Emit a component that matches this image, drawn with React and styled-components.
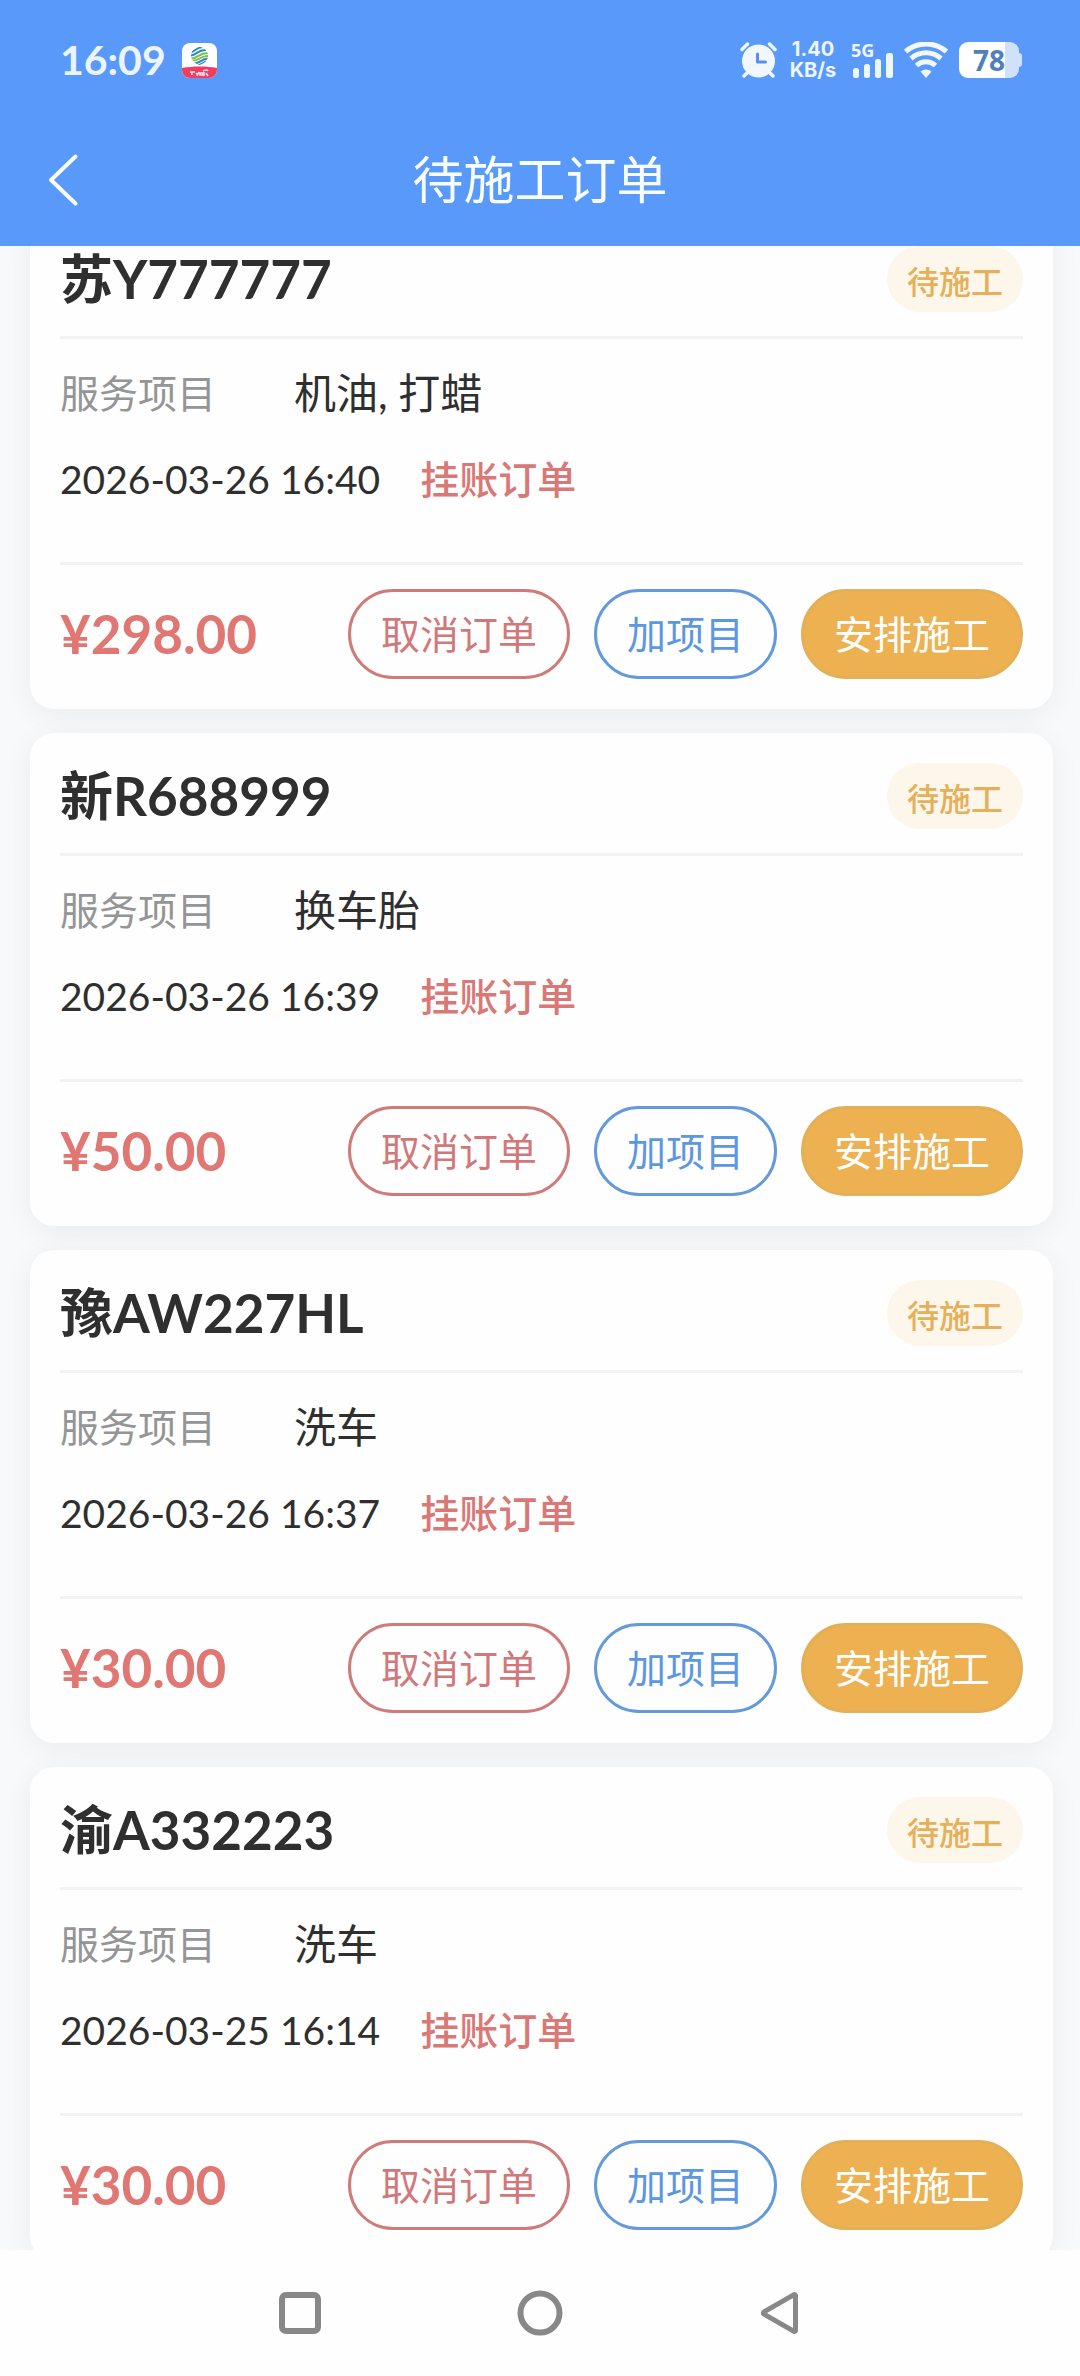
import React, { useLayoutEffect, useRef } from "react";
import styled, { createGlobalStyle, css } from "styled-components";

const GlobalStyle = createGlobalStyle`
  *, *::before, *::after { box-sizing: border-box; }
  body {
    margin: 0;
    background: #ffffff;
    color: #2f2f2f;
    font-family: Lato, "Noto Sans CJK SC", sans-serif;
  }
  h1, h2, p, dl, dt, dd, ul { margin: 0; padding: 0; }
  button { font-family: inherit; cursor: pointer; }
  svg { display: block; }
`;

const Screen = styled.div`
  display: flex;
  flex-direction: column;
  height: 100vh;
`;

const Header = styled.header`
  flex: none;
  background: #5999fa;
  color: #f8fdff;
`;

const StatusBar = styled.div`
  display: flex;
  align-items: center;
  justify-content: space-between;
  height: 114px;
  padding: 6px 58px 0 60px;
`;

const StatusGroup = styled.div`
  display: flex;
  align-items: center;
  gap: ${(p) => p.$gap}px;
`;

const Clock = styled.time`
  font-size: 41px;
  line-height: 48px;
  font-weight: 700;
  color: #ecf5ff;
`;

const NetSpeed = styled.div`
  display: flex;
  flex-direction: column;
  align-items: center;
  width: 46px;
  margin: 0 4px 0 2px;
  font-family: Inter, sans-serif;
  font-weight: 700;
  font-size: 20px;
  line-height: 21px;
  color: #eef6ff;
`;

const Signal = styled.div`
  display: grid;
  width: 42px;
  height: 36px;
  color: #eef6ff;

  > * { grid-area: 1 / 1; }
`;

const SignalLabel = styled.span`
  font-family: "Noto Sans", sans-serif;
  font-weight: 700;
  font-size: 18px;
  line-height: 16px;
`;

const Battery = styled.div`
  display: flex;
  align-items: center;
`;

const BatteryBody = styled.span`
  display: flex;
  align-items: center;
  justify-content: center;
  width: 60px;
  height: 36px;
  border-radius: 9px;
  background: linear-gradient(to right, #ffffff 46px, #cfe1fc 46px);
  color: #4f7fbf;
  font-family: "Noto Sans", sans-serif;
  font-weight: 700;
  font-size: 28px;
  line-height: 36px;
`;

const BatteryTip = styled.span`
  width: 3px;
  height: 14px;
  border-radius: 0 3px 3px 0;
  background: #cfe1fc;
`;

const TitleBar = styled.div`
  display: grid;
  grid-template-columns: 84px 1fr 84px;
  align-items: center;
  height: 132px;
`;

const BackButton = styled.button`
  display: flex;
  align-items: center;
  justify-content: flex-end;
  height: 84px;
  padding: 0 4px;
  border: 0;
  background: none;
  color: inherit;
`;

const PageTitle = styled.h1`
  font-size: 51px;
  line-height: 60px;
  font-weight: 400;
  text-align: center;
`;

const Orders = styled.main`
  flex: 1;
  min-height: 0;
  overflow-y: auto;
  scrollbar-width: none;
  background: #f8f9fb;
`;

const OrderList = styled.ul`
  display: flex;
  flex-direction: column;
  gap: 24px;
  padding: 24px 27px 24px 30px;
  list-style: none;
`;

const Card = styled.li`
  padding: 30px;
  border-radius: 24px;
  background: #fefefe;
  box-shadow: 0 6px 30px rgba(0, 0, 0, 0.06);
`;

const CardHeader = styled.div`
  display: flex;
  align-items: center;
  justify-content: space-between;
  padding-bottom: 24px;
  border-bottom: 3px solid #f2f3f5;
`;

const Plate = styled.h2`
  font-size: 53px;
  line-height: 66px;
  font-weight: 700;
`;

const Badge = styled.span`
  padding: 6px 20px 0;
  border-radius: 33px;
  background: #fdf6ea;
  color: #e5b059;
  font-size: 32px;
  line-height: 60px;
  font-weight: 500;
`;

const CardBody = styled.div`
  display: flex;
  flex-direction: column;
  gap: 26px;
  padding: 24px 0 53px;
`;

const Row = styled.div`
  display: flex;
  align-items: center;
  height: 60px;
  font-size: 39px;
  line-height: 60px;
`;

const Services = styled(Row).attrs({ as: "dl" })``;

const Label = styled.dt`
  width: 234px;
  color: #949596;
`;

const Value = styled.dd`
  font-size: 42px;
`;

const OrderTime = styled.time`
  font-size: 39px;
`;

const CreditTag = styled.span`
  margin-left: 40px;
  color: #d97875;
  font-weight: 500;
`;

const CardFooter = styled.div`
  display: flex;
  align-items: center;
  justify-content: space-between;
  padding-top: 24px;
  border-top: 3px solid #f1f2f3;
`;

const Price = styled.p`
  font-size: 53px;
  line-height: 66px;
  font-weight: 700;
  color: #e07772;
`;

const Actions = styled.div`
  display: flex;
  gap: 24px;
`;

const tones = {
  danger: css`
    border-color: #cf7b7a;
    background: #fefefe;
    color: #d1787a;
  `,
  primary: css`
    border-color: #6499dc;
    background: #fefefe;
    color: #5c97e2;
  `,
  warning: css`
    border-color: #e3b058;
    background: #edb152;
    color: #ffffff;
  `,
};

const ActionButton = styled.button`
  height: 90px;
  padding: 0 30px;
  border: 3px solid;
  border-radius: 45px;
  font-size: 39px;
  line-height: 60px;
  ${(p) => tones[p.$tone]}
`;

const SystemNav = styled.nav`
  flex: none;
  display: flex;
  align-items: center;
  justify-content: center;
  gap: 192px;
  height: 126px;
  background: #fefefe;
`;

const NavKey = styled.button`
  width: 48px;
  height: 48px;
  padding: 0;
  border: 0;
  background: none;
  color: #888888;
`;

function AppBadge() {
  return (
    <svg width="35" height="35" viewBox="0 0 35 35" aria-hidden="true">
      <defs>
        <clipPath id="badge-shape">
          <rect width="35" height="35" rx="8" />
        </clipPath>
        <clipPath id="badge-globe">
          <path d="M17.500 3.500c5 1.500 8.500 4.500 8.500 9s-3.500 8-8.500 9.500c-5-1.500-8.500-5-8.500-9.500s3.500-7.500 8.500-9z" />
        </clipPath>
      </defs>
      <g clipPath="url(#badge-shape)">
        <rect width="35" height="35" fill="#ffffff" />
        <path d="M0 25c10-2 25-2 35 0v10H0z" fill="#f03e63" />
        <g clipPath="url(#badge-globe)" fill="none" strokeWidth="2">
          <path d="M7 9c5 2 6-5 14-5M7 12.500c7 1 8-6 17-5.500" stroke="#2b86c5" />
          <path d="M8 15.500c8 1 8-6 19-5.500M8 18c9 1 10-6 19-5" stroke="#7cc04b" />
          <path d="M10 20.500c8 1 9-5 17-5M14 22.500c6 0 7-4 13-4.500" stroke="#2b86c5" />
        </g>
        <path
          d="M8 29h5M10 29v3M14 30l2 2M17 29l-2 4M18 30h3v2h-3zM22 29v4M21 28c3-1 4-2 5 0M24 30l2 3"
          fill="none"
          stroke="#ffe3ea"
          strokeWidth="1.500"
        />
      </g>
    </svg>
  );
}

function AlarmIcon() {
  return (
    <svg width="37" height="36" viewBox="0 0 37 36" fill="none" strokeLinecap="round" aria-hidden="true">
      <path d="M2 7.500 7.500 2M35 7.500 29.500 2M4 34l4-4M33 34l-4-4" stroke="#eef6ff" strokeWidth="3.500" />
      <circle cx="18.500" cy="19" r="16.500" fill="#f1f7ff" />
      <path d="M17.500 12v8h8" stroke="#5b8fe6" strokeWidth="3" strokeLinejoin="round" />
    </svg>
  );
}

function SignalBars() {
  return (
    <svg width="42" height="36" viewBox="0 0 42 36" fill="currentColor" aria-hidden="true">
      <rect x="2" y="26" width="6" height="10" rx="2.500" />
      <rect x="13" y="22" width="6" height="14" rx="2.500" />
      <rect x="24" y="17" width="6" height="19" rx="2.500" />
      <rect x="35" y="11" width="7" height="25" rx="2.500" />
    </svg>
  );
}

function WifiIcon() {
  return (
    <svg width="44" height="36" viewBox="0 0 44 36" fill="none" stroke="#f1f8ff" strokeWidth="5" aria-hidden="true">
      <path d="M1.500 9.500C13.500-.6 30.500-.6 42.500 9.500" />
      <path d="M7 16.500c9-7.600 21-7.600 30 0" />
      <path d="M12.500 23.500c5.500-5 13.500-5 19 0" />
      <path d="M16.500 29.500c3-2.700 8-2.700 11 0L22 36z" fill="#f1f8ff" stroke="none" />
    </svg>
  );
}

const orders = [
  { plate: "苏Y777777", service: "机油, 打蜡", time: "2026-03-26 16:40", price: "¥298.00" },
  { plate: "新R688999", service: "换车胎", time: "2026-03-26 16:39", price: "¥50.00" },
  { plate: "豫AW227HL", service: "洗车", time: "2026-03-26 16:37", price: "¥30.00" },
  { plate: "渝A332223", service: "洗车", time: "2026-03-25 16:14", price: "¥30.00" },
];

function OrderCard({ order }) {
  return (
    <Card>
      <CardHeader>
        <Plate>{order.plate}</Plate>
        <Badge>待施工</Badge>
      </CardHeader>
      <CardBody>
        <Services>
          <Label>服务项目</Label>
          <Value>{order.service}</Value>
        </Services>
        <Row>
          <OrderTime>{order.time}</OrderTime>
          <CreditTag>挂账订单</CreditTag>
        </Row>
      </CardBody>
      <CardFooter>
        <Price>{order.price}</Price>
        <Actions>
          <ActionButton type="button" $tone="danger">取消订单</ActionButton>
          <ActionButton type="button" $tone="primary">加项目</ActionButton>
          <ActionButton type="button" $tone="warning">安排施工</ActionButton>
        </Actions>
      </CardFooter>
    </Card>
  );
}

const INITIAL_SCROLL = 54;

export default function App() {
  const scroller = useRef(null);

  useLayoutEffect(() => {
    scroller.current.scrollTop = INITIAL_SCROLL;
  }, []);

  return (
    <>
      <GlobalStyle />
      <Screen>
        <Header>
          <StatusBar>
            <StatusGroup $gap={16}>
              <Clock>16:09</Clock>
              <AppBadge />
            </StatusGroup>
            <StatusGroup $gap={11}>
              <AlarmIcon />
              <NetSpeed>
                <span>1.40</span>
                <span>KB/s</span>
              </NetSpeed>
              <Signal>
                <SignalLabel>5G</SignalLabel>
                <SignalBars />
              </Signal>
              <WifiIcon />
              <Battery>
                <BatteryBody>78</BatteryBody>
                <BatteryTip />
              </Battery>
            </StatusGroup>
          </StatusBar>
          <TitleBar>
            <BackButton type="button" aria-label="返回">
              <svg width="32" height="54" viewBox="0 0 32 54" fill="none" aria-hidden="true">
                <path
                  d="M27.500 3.500 3 27l24.500 23.500"
                  stroke="currentColor"
                  strokeWidth="4"
                  strokeLinecap="round"
                  strokeLinejoin="round"
                />
              </svg>
            </BackButton>
            <PageTitle>待施工订单</PageTitle>
          </TitleBar>
        </Header>
        <Orders ref={scroller}>
          <OrderList>
            {orders.map((order) => (
              <OrderCard key={order.plate} order={order} />
            ))}
          </OrderList>
        </Orders>
        <SystemNav>
          <NavKey type="button" aria-label="最近任务">
            <svg width="48" height="48" viewBox="0 0 48 48" fill="none" stroke="currentColor" strokeWidth="6" aria-hidden="true">
              <rect x="6" y="6" width="36" height="36" rx="4" />
            </svg>
          </NavKey>
          <NavKey type="button" aria-label="主屏幕">
            <svg width="48" height="48" viewBox="0 0 48 48" fill="none" stroke="currentColor" strokeWidth="6" aria-hidden="true">
              <circle cx="24" cy="24" r="19.500" />
            </svg>
          </NavKey>
          <NavKey type="button" aria-label="返回上一页">
            <svg width="48" height="48" viewBox="0 0 48 48" fill="none" stroke="currentColor" strokeWidth="5" strokeLinejoin="round" aria-hidden="true">
              <path d="M39.500 6.500v35a1 1 0 0 1-1.500.8L8 25.200a1.400 1.400 0 0 1 0-2.400L38 5.700a1 1 0 0 1 1.500.8z" />
            </svg>
          </NavKey>
        </SystemNav>
      </Screen>
    </>
  );
}
